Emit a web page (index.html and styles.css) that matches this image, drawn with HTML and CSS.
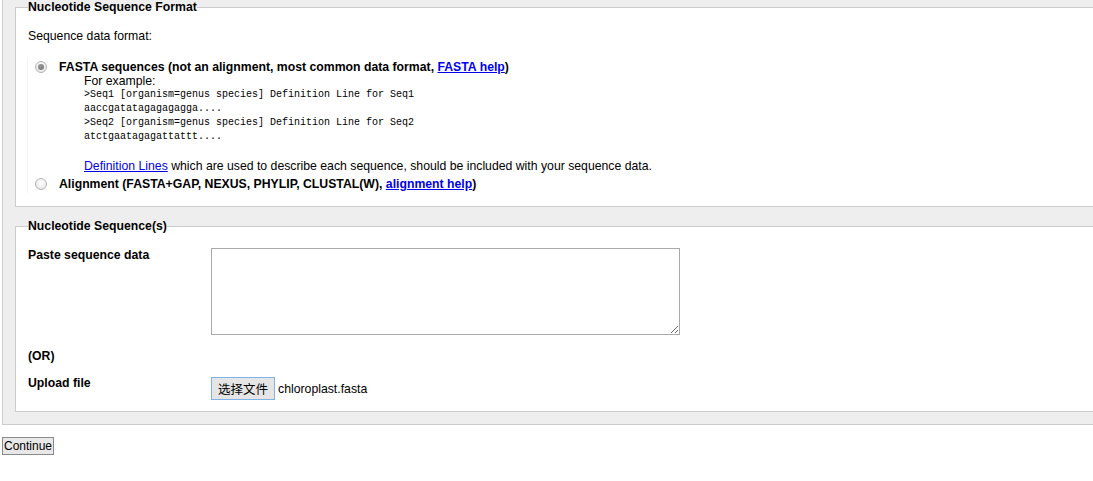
FILE: index.html
```html
<!DOCTYPE html>
<html lang="en">
<head>
    <meta charset="UTF-8">
    <meta name="viewport" content="width=device-width, initial-scale=1.0">
    <title>Nucleotide Submission</title>
    <link rel="stylesheet" href="styles.css">
</head>
<body>
    <form class="panel">
        <fieldset class="group">
            <legend>Nucleotide Sequence Format</legend>
            <p class="intro">Sequence data format:</p>
            <div class="options">
                <label class="option">
                    <input type="radio" name="format" value="fasta" checked>
                    <span class="option-title">FASTA sequences (not an alignment, most common data format, <a href="#">FASTA help</a>)</span>
                </label>
                <div class="example">
                    <div>For example:</div>
<pre>&gt;Seq1 [organism=genus species] Definition Line for Seq1
aaccgatatagagagagga....
&gt;Seq2 [organism=genus species] Definition Line for Seq2
atctgaatagagattattt....</pre>
                    <div class="note"><a href="#">Definition Lines</a> which are used to describe each sequence, should be included with your sequence data.</div>
                </div>
                <label class="option option-last">
                    <input type="radio" name="format" value="alignment">
                    <span class="option-title">Alignment (FASTA+GAP, NEXUS, PHYLIP, CLUSTAL(W), <a href="#">alignment help</a>)</span>
                </label>
            </div>
        </fieldset>

        <fieldset class="group">
            <legend>Nucleotide Sequence(s)</legend>
            <div class="fields">
                <label class="field-label" for="seqData">Paste sequence data</label>
                <textarea id="seqData" class="seq-box"></textarea>

                <div class="field-label or-row">(OR)</div>
                <div></div>

                <div class="field-label upload-row">Upload file</div>
                <div class="file-control">
                    <button type="button" class="file-btn">选择文件</button>
                    <span class="file-name">chloroplast.fasta</span>
                </div>
            </div>
        </fieldset>
    </form>

    <button type="button" class="continue">Continue</button>
</body>
</html>
```

FILE: styles.css
```css
html {
    overflow: hidden;
}
body {
    margin: 0;
    font-family: "Liberation Sans", Arial, sans-serif;
    font-size: 12.25px;
    line-height: 14px;
    color: #000;
}
a {
    color: #0000ee;
    text-decoration: underline;
}
.panel {
    width: 1200px;
    margin: 0 0 0 2px;
    padding: 0 0 12px 0;
    background-color: #eeeeee;
    border: 1px solid #cccccc;
    border-top: none;
}
.group {
    margin: 0 0 12px 12px;
    padding: 0 12px 13px 12px;
    border: 1px solid #cccccc;
    background-color: #ffffff;
    min-width: 0;
}
.group:last-child {
    margin-bottom: 0;
    padding-bottom: 11px;
}
.group legend {
    padding: 0;
    font-weight: bold;
    line-height: 14px;
}
.intro {
    margin: 15px 0 0 0;
}
.options {
    margin: 15px 0 0 -1px;
    padding: 2px 0 2px 0;
    border-left: 1px solid #f2f2f2;
}
.option {
    display: flex;
    align-items: center;
    font-weight: bold;
}
.option input[type="radio"] {
    appearance: none;
    -webkit-appearance: none;
    width: 12px;
    height: 12px;
    margin: 0 12px 0 7px;
    border: 1px solid #b4b4b4;
    border-radius: 50%;
    background: radial-gradient(circle at 50% 40%, #ffffff 0%, #f0f0f0 55%, #dcdcdc 100%);
    box-sizing: border-box;
    position: relative;
}
.option input[type="radio"]:checked::after {
    content: "";
    position: absolute;
    left: 2px;
    top: 2px;
    width: 6px;
    height: 6px;
    border-radius: 50%;
    background: radial-gradient(circle at 40% 35%, #9a9a9a 0%, #6e6e6e 100%);
}
.option-last {
    margin-top: 4px;
}
.example {
    margin-left: 56px;
}
.example pre {
    margin: 0;
    font-family: "Liberation Mono", "Courier New", monospace;
    font-size: 10px;
    line-height: 14px;
}
.note {
    margin-top: 15px;
}
.fields {
    display: grid;
    grid-template-columns: 183px auto;
    margin-top: 15px;
}
.field-label {
    font-weight: bold;
}
.seq-box {
    width: 469px;
    height: 87px;
    margin: 0;
    border: 1px solid #a9a9a9;
    box-sizing: border-box;
    font-family: "Liberation Mono", monospace;
    font-size: 12px;
}
.or-row {
    margin-top: 14px;
}
.upload-row {
    margin-top: 13px;
}
.file-control {
    display: flex;
    align-items: center;
    margin-top: 14px;
}
.file-btn {
    height: 23px;
    padding: 0 6px;
    margin: 0 3px 0 0;
    background-color: #e5e5e5;
    border: 1px solid #7eb4ea;
    border-radius: 0;
    font-family: "Noto Sans CJK SC", "Liberation Sans", sans-serif;
    font-size: 12.5px;
    color: #000;
}
.file-name {
    font-size: 12.25px;
}
.continue {
    display: block;
    margin: 12px 0 0 2px;
    height: 18px;
    padding: 0 1px;
    background-color: #e8e8e8;
    border: 1px solid #8a8a8a;
    border-radius: 0;
    font-family: "Liberation Sans", Arial, sans-serif;
    font-size: 12px;
    line-height: 14px;
    color: #000;
}
```
